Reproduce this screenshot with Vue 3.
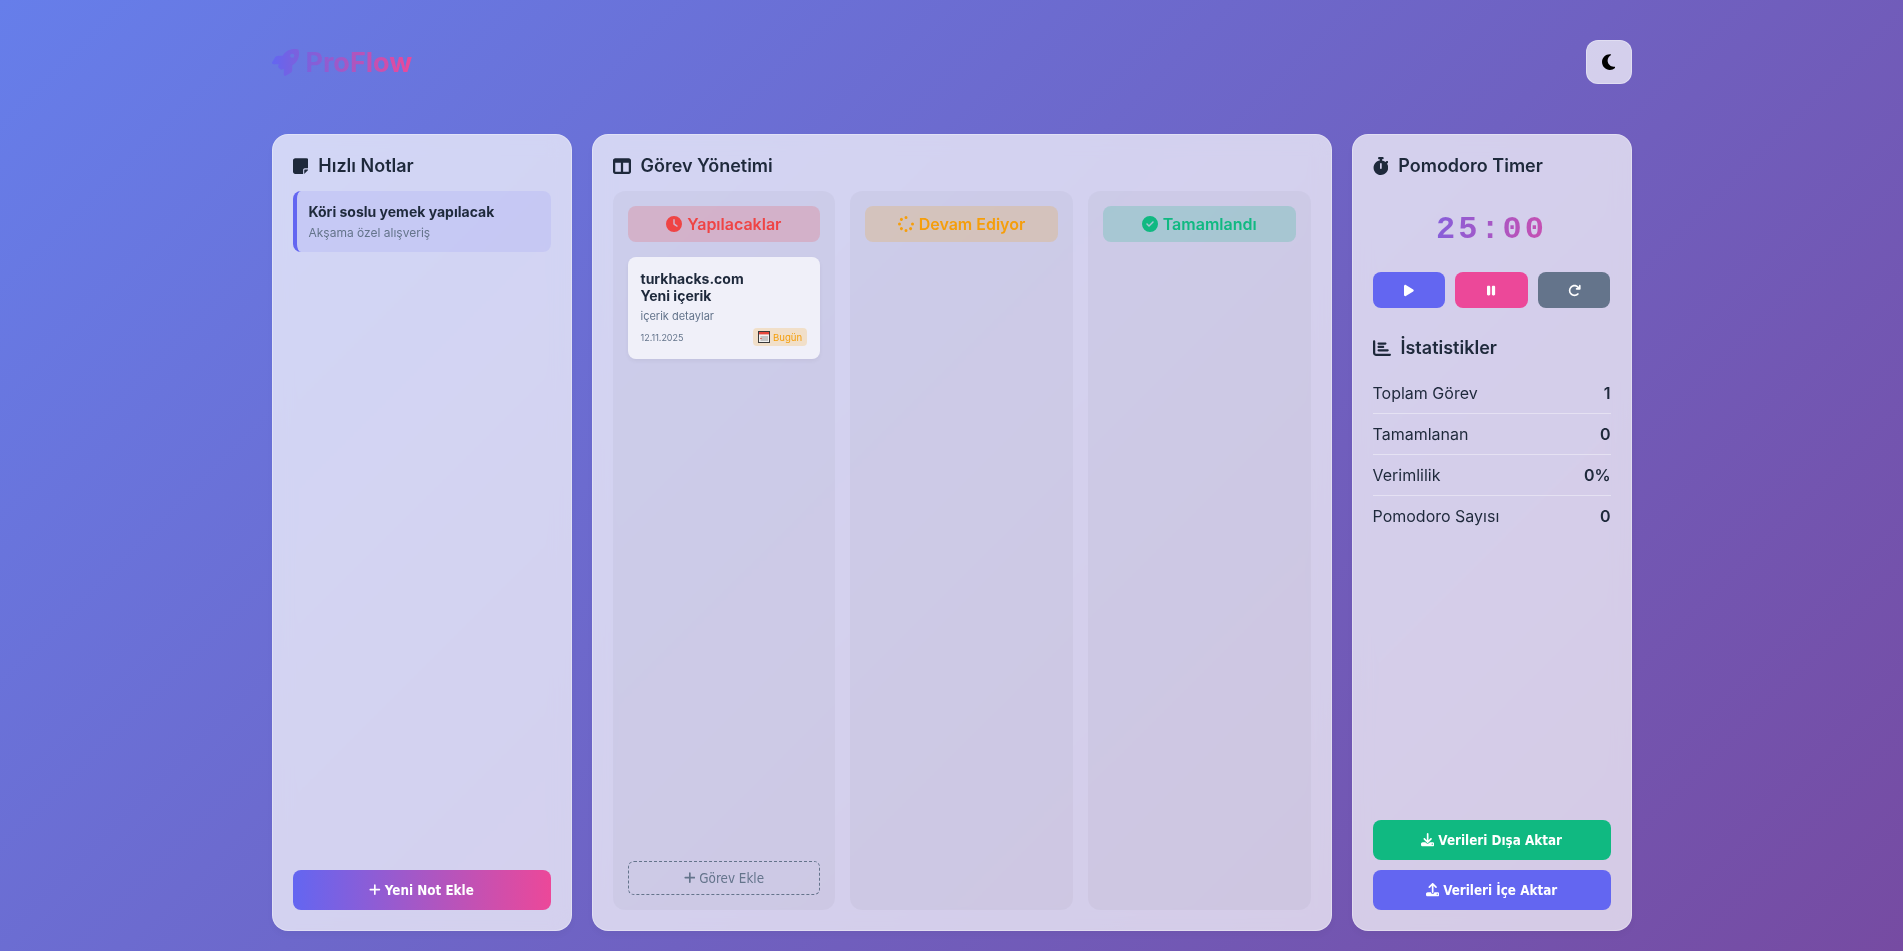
<script setup>
const icons = {
  rocket: { box: '0 0 512 512', d: 'M156.6 384.9L125.7 354c-8.5-8.5-11.5-20.8-7.7-32.2c3-8.9 7-20.5 11.8-33.8L24 288c-8.6 0-16.6-4.6-20.9-12.1s-4.2-16.7 .2-24.1l52.5-88.5c13-21.9 36.5-35.3 61.9-35.3l82.3 0c2.4-4 4.8-7.7 7.2-11.3C289.1-4.1 411.1-8.1 483.9 5.3c11.6 2.1 20.6 11.2 22.8 22.8c13.4 72.9 9.3 194.8-111.4 276.7c-3.5 2.4-7.3 4.8-11.3 7.2v82.3c0 25.4-13.4 49-35.3 61.9l-88.5 52.5c-7.4 4.4-16.6 4.5-24.1 .2s-12.1-12.2-12.1-20.9V380.8c-14.1 4.9-26.4 8.9-35.7 11.9c-11.2 3.6-23.4 .5-31.8-7.8zM384 168a40 40 0 1 0 0-80 40 40 0 1 0 0 80z' },
  moon: { box: '0 0 384 512', d: 'M223.5 32C100 32 0 132.3 0 256S100 480 223.5 480c60.6 0 115.5-24.2 155.8-63.4c5-4.9 6.3-12.5 3.1-18.7s-10.1-9.7-17-8.5c-9.8 1.7-19.8 2.6-30.1 2.6c-96.9 0-175.5-78.8-175.5-176c0-65.8 36-123.1 89.3-153.3c6.1-3.5 9.2-10.5 7.7-17.3s-7.3-11.9-14.3-12.5c-6.3-.5-12.6-.8-19-.8z' },
  note: { box: '0 0 448 512', d: 'M64 32C28.7 32 0 60.7 0 96V416c0 35.3 28.7 64 64 64H288V368c0-26.5 21.5-48 48-48H448V96c0-35.3-28.7-64-64-64H64zM448 352H402.7 336c-8.8 0-16 7.2-16 16v66.7V480l32-32 64-64 32-32z' },
  columns: { box: '0 0 512 512', d: 'M0 96C0 60.7 28.7 32 64 32H448c35.3 0 64 28.7 64 64V416c0 35.3-28.7 64-64 64H64c-35.3 0-64-28.7-64-64V96zm64 64V416H224V160H64zm384 0H288V416H448V160z' },
  stopwatch: { box: '0 0 448 512', d: 'M176 0c-17.7 0-32 14.3-32 32s14.3 32 32 32h16V98.4C92.3 113.8 16 200 16 304c0 114.9 93.1 208 208 208s208-93.1 208-208c0-41.8-12.3-80.7-33.5-113.2l24.1-24.1c12.5-12.5 12.5-32.8 0-45.3s-32.8-12.5-45.3 0L355.7 143c-28.1-23-62.2-38.8-99.7-44.6V64h16c17.7 0 32-14.3 32-32s-14.3-32-32-32H224 176zm72 192V320c0 13.3-10.7 24-24 24s-24-10.7-24-24V192c0-13.3 10.7-24 24-24s24 10.7 24 24z' },
  play: { box: '0 0 384 512', d: 'M73 39c-14.8-9.1-33.4-9.4-48.5-.9S0 62.6 0 80V432c0 17.4 9.4 33.4 24.5 41.9s33.7 8.1 48.5-.9L361 297c14.3-8.7 23-24.2 23-41s-8.7-32.2-23-41L73 39z' },
  pause: { box: '0 0 320 512', d: 'M48 64C21.5 64 0 85.5 0 112V400c0 26.5 21.5 48 48 48H80c26.5 0 48-21.5 48-48V112c0-26.5-21.5-48-48-48H48zm192 0c-26.5 0-48 21.5-48 48V400c0 26.5 21.5 48 48 48h32c26.5 0 48-21.5 48-48V112c0-26.5-21.5-48-48-48H240z' },
  redo: { box: '0 0 512 512', d: 'M386.3 160H336c-17.7 0-32 14.3-32 32s14.3 32 32 32H464c17.7 0 32-14.3 32-32V64c0-17.7-14.3-32-32-32s-32 14.3-32 32v51.2L414.4 97.6c-87.5-87.5-229.3-87.5-316.8 0s-87.5 229.3 0 316.8s229.3 87.5 316.8 0c12.5-12.5 12.5-32.8 0-45.3s-32.8-12.5-45.3 0c-62.5 62.5-163.8 62.5-226.3 0s-62.5-163.8 0-226.3s163.8-62.5 226.3 0L386.3 160z' },
  clock: { box: '0 0 512 512', d: 'M256 0a256 256 0 1 1 0 512A256 256 0 1 1 256 0zM232 120V256c0 8 4 15.5 10.7 20l96 64c11 7.4 25.9 4.4 33.3-6.7s4.4-25.9-6.7-33.3L280 243.2V120c0-13.3-10.7-24-24-24s-24 10.7-24 24z' },
  check: { box: '0 0 512 512', d: 'M256 512A256 256 0 1 0 256 0a256 256 0 1 0 0 512zM369 209L241 337c-9.4 9.4-24.6 9.4-33.9 0l-64-64c-9.4-9.4-9.4-24.6 0-33.9s24.6-9.4 33.9 0l47 47L335 175c9.4-9.4 24.6-9.4 33.9 0s9.4 24.6 0 33.9z' },
  spinner: { box: '0 0 512 512', d: 'M304 48a48 48 0 1 0 -96 0 48 48 0 1 0 96 0zm0 416a48 48 0 1 0 -96 0 48 48 0 1 0 96 0zM48 304a48 48 0 1 0 0-96 48 48 0 1 0 0 96zm464-48a48 48 0 1 0 -96 0 48 48 0 1 0 96 0zM142.9 437A48 48 0 1 0 75 369.1 48 48 0 1 0 142.9 437zm0-294.2A48 48 0 1 0 75 75a48 48 0 1 0 67.9 67.9zM369.1 437A48 48 0 1 0 437 369.1 48 48 0 1 0 369.1 437z' },
  chart: { box: '0 0 512 512', d: 'M32 32c17.7 0 32 14.3 32 32V400c0 8.8 7.2 16 16 16H480c17.7 0 32 14.3 32 32s-14.3 32-32 32H80c-44.2 0-80-35.8-80-80V64C0 46.3 14.3 32 32 32zm96 96c0-17.7 14.3-32 32-32l192 0c17.7 0 32 14.3 32 32s-14.3 32-32 32l-192 0c-17.7 0-32-14.3-32-32zm32 64H288c17.7 0 32 14.3 32 32s-14.3 32-32 32H160c-17.7 0-32-14.3-32-32s14.3-32 32-32zm0 96H416c17.7 0 32 14.3 32 32s-14.3 32-32 32H160c-17.7 0-32-14.3-32-32s14.3-32 32-32z' },
  plus: { box: '0 0 448 512', d: 'M256 80c0-17.7-14.3-32-32-32s-32 14.3-32 32V224H48c-17.7 0-32 14.3-32 32s14.3 32 32 32H192V432c0 17.7 14.3 32 32 32s32-14.3 32-32V288H400c17.7 0 32-14.3 32-32s-14.3-32-32-32H256V80z' },
  download: { box: '0 0 512 512', d: 'M288 32c0-17.7-14.3-32-32-32s-32 14.3-32 32V274.7l-73.4-73.4c-12.5-12.5-32.8-12.5-45.3 0s-12.5 32.8 0 45.3l128 128c12.5 12.5 32.8 12.5 45.3 0l128-128c12.5-12.5 12.5-32.8 0-45.3s-32.8-12.5-45.3 0L288 274.7V32zM64 352c-35.3 0-64 28.7-64 64v32c0 35.3 28.7 64 64 64H448c35.3 0 64-28.7 64-64V416c0-35.3-28.7-64-64-64H346.5l-45.3 45.3c-25 25-65.5 25-90.5 0L165.5 352H64zm368 56a24 24 0 1 1 0 48 24 24 0 1 1 0-48z' },
  upload: { box: '0 0 512 512', d: 'M288 109.3V352c0 17.7-14.3 32-32 32s-32-14.3-32-32V109.3l-73.4 73.4c-12.5 12.5-32.8 12.5-45.3 0s-12.5-32.8 0-45.3l128-128c12.5-12.5 32.8-12.5 45.3 0l128 128c12.5 12.5 12.5 32.8 0 45.3s-32.8 12.5-45.3 0L288 109.3zM64 352H192c0 35.3 28.7 64 64 64s64-28.7 64-64H448c35.3 0 64 28.7 64 64v32c0 35.3-28.7 64-64 64H64c-35.3 0-64-28.7-64-64V416c0-35.3 28.7-64 64-64zM432 456a24 24 0 1 0 0-48 24 24 0 1 0 0 48z' }
}

const columns = [
  { title: 'Yapılacaklar', icon: 'clock', cls: 'todo' },
  { title: 'Devam Ediyor', icon: 'spinner', cls: 'doing' },
  { title: 'Tamamlandı', icon: 'check', cls: 'done' }
]

const stats = [
  { label: 'Toplam Görev', value: '1' },
  { label: 'Tamamlanan', value: '0' },
  { label: 'Verimlilik', value: '0%' },
  { label: 'Pomodoro Sayısı', value: '0' }
]
</script>

<template>
  <div class="page">
    <header class="top">
      <div class="logo">
        <svg class="logo-icon" viewBox="0 0 512 512">
          <defs>
            <linearGradient id="logoGrad" x1="0" y1="0" x2="1" y2="0">
              <stop offset="0" stop-color="#6366f1" />
              <stop offset="1" stop-color="#7d60dc" />
            </linearGradient>
          </defs>
          <path :d="icons.rocket.d" fill="url(#logoGrad)" />
        </svg>
        <span class="logo-text">ProFlow</span>
      </div>
      <button class="theme-btn">
        <svg class="ico moon" :viewBox="icons.moon.box"><path :d="icons.moon.d" /></svg>
      </button>
    </header>

    <main class="board">
      <section class="card">
        <h3 class="title">
          <svg class="ico" :viewBox="icons.note.box"><path :d="icons.note.d" /></svg>
          Hızlı Notlar
        </h3>
        <div class="notes">
          <div class="note">
            <div class="note-title">Köri soslu yemek yapılacak</div>
            <div class="note-text">Akşama özel alışveriş</div>
          </div>
        </div>
        <button class="wide-btn gradient">
          <svg class="ico" :viewBox="icons.plus.box"><path :d="icons.plus.d" /></svg>
          Yeni Not Ekle
        </button>
      </section>

      <section class="card">
        <h3 class="title">
          <svg class="ico" :viewBox="icons.columns.box"><path :d="icons.columns.d" /></svg>
          Görev Yönetimi
        </h3>
        <div class="kanban">
          <div v-for="col in columns" :key="col.cls" class="column">
            <div :class="['col-head', col.cls]">
              <svg class="ico" :viewBox="icons[col.icon].box"><path :d="icons[col.icon].d" /></svg>
              {{ col.title }}
            </div>
            <template v-if="col.cls === 'todo'">
              <div class="task">
                <div class="task-title">turkhacks.com<br />Yeni içerik</div>
                <div class="task-text">içerik detaylar</div>
                <div class="task-meta">
                  <span class="date">12.11.2025</span>
                  <span class="due">
                    <svg class="cal" viewBox="0 0 12 12">
                      <rect width="12" height="12" fill="#3a3a3a" />
                      <rect x="1" y="1" width="10" height="10" fill="#f2f2f2" />
                      <rect x="1" y="1" width="10" height="2.4" fill="#e5483c" />
                      <rect x="2.5" y="5" width="7.5" height="5" fill="#c4c4c4" />
                      <rect x="2" y="7" width="2" height="1" fill="#d9776d" />
                    </svg>
                    Bugün
                  </span>
                </div>
              </div>
              <button class="add-task">
                <svg class="ico" :viewBox="icons.plus.box"><path :d="icons.plus.d" /></svg>
                Görev Ekle
              </button>
            </template>
          </div>
        </div>
      </section>

      <section class="card">
        <h3 class="title">
          <svg class="ico" :viewBox="icons.stopwatch.box"><path :d="icons.stopwatch.d" /></svg>
          Pomodoro Timer
        </h3>
        <div class="timer">25:00</div>
        <div class="controls">
          <button class="ctrl play"><svg class="ico" :viewBox="icons.play.box"><path :d="icons.play.d" /></svg></button>
          <button class="ctrl pause"><svg class="ico" :viewBox="icons.pause.box"><path :d="icons.pause.d" /></svg></button>
          <button class="ctrl reset"><svg class="ico" :viewBox="icons.redo.box"><path :d="icons.redo.d" /></svg></button>
        </div>
        <h3 class="title stats-title">
          <svg class="ico" :viewBox="icons.chart.box"><path :d="icons.chart.d" /></svg>
          İstatistikler
        </h3>
        <div class="stats">
          <div v-for="s in stats" :key="s.label" class="stat">
            <span>{{ s.label }}</span>
            <b>{{ s.value }}</b>
          </div>
        </div>
        <div class="data-btns">
          <button class="wide-btn green">
            <svg class="ico" :viewBox="icons.download.box"><path :d="icons.download.d" /></svg>
            Verileri Dışa Aktar
          </button>
          <button class="wide-btn indigo">
            <svg class="ico" :viewBox="icons.upload.box"><path :d="icons.upload.d" /></svg>
            Verileri İçe Aktar
          </button>
        </div>
      </section>
    </main>
  </div>
</template>

<style>
html, body {
  margin: 0;
  height: 100%;
}
body {
  background: linear-gradient(135deg, #667eea 0%, #764ba2 100%);
  font-family: Inter, "Noto Sans", sans-serif;
  overflow: hidden;
}
</style>

<style scoped>
.page {
  box-sizing: border-box;
  height: 951px;
  width: 1360px;
  margin: 0 auto;
  padding: 40px 0 20px;
  display: flex;
  flex-direction: column;
  color: #1e293b;
}

.ico {
  height: 1em;
  fill: currentColor;
  flex: none;
}

button {
  border: none;
  cursor: pointer;
  font-family: "DejaVu Sans Condensed", "DejaVu Sans", sans-serif;
  font-size: 13.33px;
}

.top {
  display: flex;
  justify-content: space-between;
  align-items: center;
  height: 44px;
  margin-bottom: 50px;
}

.logo {
  display: flex;
  align-items: center;
  gap: 7px;
}

.logo-icon {
  width: 27px;
  height: 27px;
}

.logo-text {
  font-size: 27px;
  font-weight: 700;
  background: linear-gradient(90deg, #7d60dc, #ec4899);
  -webkit-background-clip: text;
  background-clip: text;
  color: transparent;
}

.theme-btn {
  width: 46px;
  height: 44px;
  border-radius: 12px;
  background: rgba(255, 255, 255, 0.7);
  border: 1px solid rgba(255, 255, 255, 0.3);
  display: flex;
  align-items: center;
  justify-content: center;
  font-size: 18px;
  color: #000;
}

.board {
  flex: 1;
  min-height: 0;
  display: grid;
  grid-template-columns: 300px 1fr 280px;
  gap: 20px;
}

.card {
  box-sizing: border-box;
  min-width: 0;
  display: flex;
  flex-direction: column;
  padding: 20px;
  border-radius: 16px;
  background: rgba(255, 255, 255, 0.7);
  border: 1px solid rgba(255, 255, 255, 0.3);
  backdrop-filter: blur(10px);
  box-shadow: 0 4px 6px rgba(0, 0, 0, 0.03);
}

.title {
  display: flex;
  align-items: center;
  gap: 10px;
  margin: 0 0 15px;
  font-size: 18px;
  font-weight: 600;
}

.notes {
  flex: 1;
}

.note {
  padding: 12px;
  border-left: 4px solid #6366f1;
  border-radius: 8px;
  background: rgba(99, 102, 241, 0.1);
}

.note-title {
  font-size: 14px;
  font-weight: 700;
  margin-bottom: 5px;
}

.note-text {
  font-size: 12px;
  color: #64748b;
}

.wide-btn {
  height: 40px;
  border-radius: 8px;
  color: #fff;
  font-weight: 700;
  display: flex;
  align-items: center;
  justify-content: center;
  gap: 4px;
}

.gradient {
  background: linear-gradient(90deg, #6366f1, #ec4899);
}

.green {
  background: #10b981;
}

.indigo {
  background: #6366f1;
}

.kanban {
  flex: 1;
  min-height: 0;
  display: grid;
  grid-template-columns: repeat(3, 1fr);
  gap: 15px;
}

.column {
  display: flex;
  flex-direction: column;
  padding: 15px;
  border-radius: 12px;
  background: rgba(0, 0, 0, 0.03);
}

.col-head {
  height: 36px;
  display: flex;
  align-items: center;
  justify-content: center;
  gap: 5px;
  border-radius: 8px;
  margin-bottom: 15px;
  font-size: 16px;
  font-weight: 600;
}

.todo {
  color: #ef4444;
  background: rgba(239, 68, 68, 0.2);
}

.doing {
  color: #f59e0b;
  background: rgba(245, 158, 11, 0.2);
}

.done {
  color: #10b981;
  background: rgba(16, 185, 129, 0.2);
}

.task {
  padding: 13px;
  border-radius: 8px;
  background: rgba(255, 255, 255, 0.7);
  box-shadow: 0 2px 4px rgba(0, 0, 0, 0.05);
  flex: none;
}

.task-title {
  font-size: 14px;
  font-weight: 700;
  margin-bottom: 5px;
}

.task-text {
  font-size: 11px;
  color: #64748b;
  margin-bottom: 5px;
}

.task-meta {
  display: flex;
  justify-content: space-between;
  align-items: center;
  color: #64748b;
}

.date {
  font-size: 9px;
}

.due {
  display: flex;
  align-items: center;
  gap: 3px;
  padding: 3px 5px;
  border-radius: 4px;
  font-size: 9.6px;
  background: rgba(245, 158, 11, 0.2);
  color: #f59e0b;
}

.cal {
  width: 12px;
  height: 12px;
}

.add-task {
  margin-top: auto;
  height: 34px;
  background: transparent;
  border: 1px dashed #64748b;
  border-radius: 6px;
  color: #64748b;
  display: flex;
  align-items: center;
  justify-content: center;
  gap: 4px;
}

.timer {
  margin: 21px 0 24px;
  text-align: center;
  font-family: "Liberation Mono", monospace;
  font-size: 32px;
  font-weight: 700;
  line-height: 36px;
  letter-spacing: 3px;
  background: linear-gradient(90deg, #6366f1, #ec4899);
  -webkit-background-clip: text;
  background-clip: text;
  color: transparent;
}

.controls {
  display: grid;
  grid-template-columns: repeat(3, 1fr);
  gap: 10px;
  margin-bottom: 29px;
}

.ctrl {
  height: 36px;
  border-radius: 8px;
  color: #fff;
  font-size: 13px;
  display: flex;
  align-items: center;
  justify-content: center;
}

.play {
  background: #6366f1;
}

.pause {
  background: #ec4899;
}

.reset {
  background: #64748b;
}

.stats-title {
  margin-bottom: 15px;
}

.stats {
  flex: 1;
}

.stat {
  display: flex;
  justify-content: space-between;
  padding: 10px 0;
  font-size: 16px;
  line-height: 20px;
  border-bottom: 1px solid rgba(255, 255, 255, 0.4);
}

.stat:last-child {
  border-bottom: none;
}

.stat b {
  font-weight: 600;
}

.data-btns {
  display: flex;
  flex-direction: column;
  gap: 10px;
}
</style>
